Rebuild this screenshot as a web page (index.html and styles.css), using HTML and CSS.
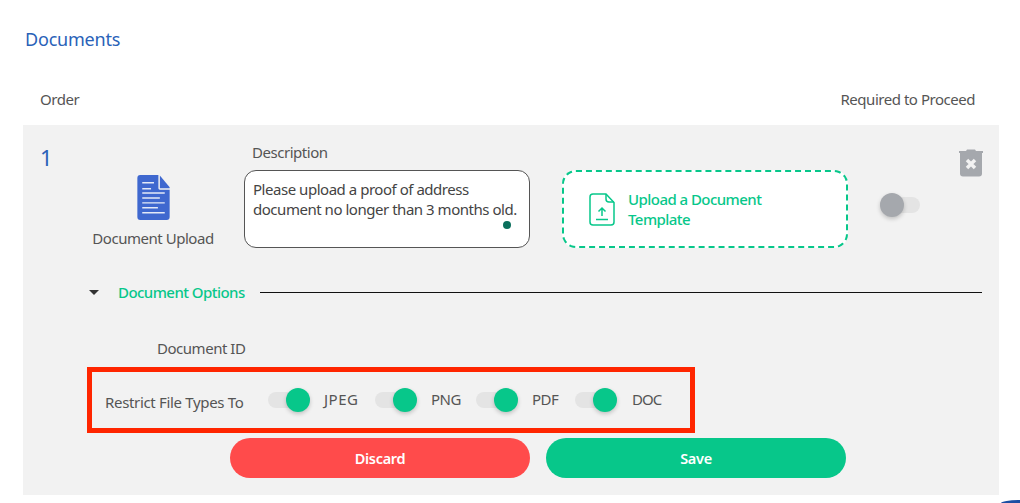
FILE: index.html
```html
<!DOCTYPE html>
<html lang="en">
<head>
<meta charset="utf-8">
<title>Documents</title>
<link rel="stylesheet" href="styles.css">
</head>
<body>
<main class="page">
  <h2 class="title">Documents</h2>
  <div class="columns"><span>Order</span><span>Required to Proceed</span></div>
  <section class="panel">
    <div class="top-row">
      <div class="order">1</div>
      <div class="doc-type">
        <svg class="doc-icon" viewBox="0 0 33 46" width="33" height="46" aria-hidden="true">
          <path d="M3 0H21.5V13.5Q21.5 15 23 15H33V43Q33 46 30 46H3Q0 46 0 43V3Q0 0 3 0Z" fill="#3f68cf"/>
          <path d="M23 0.5L33 12.5V13.5H23Z" fill="#3f68cf"/>
          <path d="M5 8H17M5 14H14M5 18.500H28M5 23.500H23M5 28.500H28M5 33.500H21M5 38.500H28" stroke="#e4e9f7" stroke-width="1.500" fill="none"/>
        </svg>
        <span>Document Upload</span>
      </div>
      <div class="description">
        <label class="desc-label">Description</label>
        <div class="desc-box">Please upload a proof of address document no longer than 3 months old.<i class="dot"></i></div>
      </div>
      <div class="upload">
        <svg viewBox="0 0 26 33" width="26" height="33" fill="none" stroke="#07c78a" stroke-width="1.500" aria-hidden="true">
          <path d="M4 1H17L25 9.500V29Q25 32 22 32H4Q1 32 1 29V4Q1 1 4 1Z"/>
          <path d="M17 1V6Q17 9 20 9H25"/>
          <path d="M13 23V15M9.500 18.500L13 15L16.500 18.500M7 26.500H19"/>
        </svg>
        <span class="upload-text">Upload a Document<br>Template</span>
      </div>
      <div class="toggle off"><i></i></div>
      <svg class="trash" viewBox="0 0 24 28" width="24" height="28" aria-hidden="true">
        <path d="M8 0.500H16L17 2H24V4H0V2H7Z" fill="#a5a8ad"/>
        <path d="M1 4H23V24.500Q23 27.500 20 27.500H4Q1 27.500 1 24.500Z" fill="#a5a8ad"/>
        <path d="M8 11L16 19M16 11L8 19" stroke="#f2f2f2" stroke-width="3.500" fill="none"/>
      </svg>
    </div>
    <div class="options-row">
      <i class="caret"></i>
      <span class="options-label">Document Options</span>
      <hr class="rule">
    </div>
    <div class="id-row">Document ID</div>
    <div class="restrict">
      <span class="restrict-label">Restrict File Types To</span>
      <div class="toggle on"><i></i></div><span class="type t-jpeg">JPEG</span>
      <div class="toggle on"><i></i></div><span class="type t-png">PNG</span>
      <div class="toggle on"><i></i></div><span class="type t-pdf">PDF</span>
      <div class="toggle on"><i></i></div><span class="type t-doc">DOC</span>
    </div>
    <div class="actions">
      <button class="btn discard">Discard</button>
      <button class="btn save">Save</button>
    </div>
  </section>
</main>
<div class="chat-bubble"></div>
</body>
</html>
```
FILE: styles.css
```css
* { box-sizing: border-box; }
html, body { height: 100%; overflow: hidden; }
body {
  margin: 0;
  background: #fff;
  color: #555;
  font-family: "Noto Sans", "Open Sans", sans-serif;
  font-size: 15px;
  letter-spacing: -0.47px;
  position: relative;
}
.page { padding: 28px 21px 0 23px; }
.title {
  margin: 0 0 0 2px;
  font-size: 18px;
  line-height: 22px;
  font-weight: 400;
  letter-spacing: -0.2px;
  color: #2a62b8;
}
.columns {
  display: flex;
  justify-content: space-between;
  margin-top: 39px;
  padding: 0 24px 0 17px;
  line-height: 20px;
  height: 36px;
}
.panel {
  background: #f2f2f2;
  height: 370px;
  padding: 0 17px;
}
.top-row { display: flex; height: 123px; }
.order {
  width: 50px;
  flex: none;
  padding-top: 19px;
  font-size: 22px;
  line-height: 26px;
  color: #2a62b8;
}
.doc-type {
  width: 126px;
  flex: none;
  padding-top: 50px;
  display: flex;
  flex-direction: column;
  align-items: center;
  gap: 8px;
  line-height: 20px;
}
.doc-icon { display: block; }
.description { margin-left: 28px; width: 286px; flex: none; padding-top: 17px; }
.desc-label { display: block; margin-left: 8px; height: 28px; line-height: 20px; }
.desc-box {
  position: relative;
  height: 78px;
  background: #fff;
  border: 1px solid #555;
  border-radius: 12px;
  padding: 8px 8px;
  line-height: 20px;
  color: #444;
}
.dot {
  position: absolute;
  right: 18px;
  bottom: 18px;
  width: 8px;
  height: 8px;
  border-radius: 50%;
  background: #0a6f5c;
}
.upload {
  margin: 45px 0 0 32px;
  width: 286px;
  flex: none;
  height: 78px;
  background: #fff;
  border: 2px dashed #07c78a;
  border-radius: 14px;
  display: flex;
  align-items: center;
  gap: 13px;
  padding-left: 25px;
  color: #07c78a;
  line-height: 20px;
  font-weight: 500;
  letter-spacing: -0.55px;
}
.toggle { position: relative; width: 42px; height: 24px; flex: none; }
.toggle::before {
  content: "";
  position: absolute;
  left: 0;
  right: 0;
  top: 4px;
  height: 16px;
  border-radius: 8px;
  background: #e4e4e4;
}
.toggle i {
  position: absolute;
  top: 0;
  width: 24px;
  height: 24px;
  border-radius: 50%;
  box-shadow: 0 2px 4px rgba(0,0,0,.2);
}
.toggle.on i { right: 0; background: #07c78a; }
.toggle.off { width: 40px; margin: 68px 0 0 32px; }
.toggle.off i { left: 0; background: #a5a8ad; }
.trash { margin: 24px 0 0 39px; flex: none; }
.options-row { display: flex; align-items: center; height: 22px; margin-top: 33px; padding-left: 49px; }
.caret {
  width: 0;
  height: 0;
  border: 5.500px solid transparent;
  border-top: 5.500px solid #333;
  border-bottom: 0;
  margin-right: 19px;
}
.options-label { color: #07c78a; font-weight: 500; width: 126px; flex: none; white-space: nowrap; letter-spacing: -0.55px; }
.rule { flex: 1; margin: 0 0 0 16px; border: 0; border-top: 1px solid #111; }
.id-row { margin-top: 35px; padding-left: 117px; line-height: 20px; }
.restrict {
  display: flex;
  align-items: center;
  width: 608px;
  height: 66px;
  margin: 9px 0 0 47px;
  border: 5px solid #ff2600;
  padding-left: 13px;
}
.restrict-label { width: 163px; flex: none; padding-top: 4px; letter-spacing: -0.33px; }
.type { margin: -2px 0 0 14px; }
.t-jpeg { width: 51px; letter-spacing: 0.5px; }
.t-png { width: 45px; }
.t-pdf { width: 43px; }
.t-doc { margin-left: 15px; letter-spacing: -0.9px; }
.actions { display: flex; gap: 16px; margin: 5px 0 0 190px; }
.btn {
  width: 300px;
  height: 40px;
  border: 0;
  border-radius: 20px;
  color: #fff;
  font: 600 14.500px "Noto Sans", "Open Sans", sans-serif;
  letter-spacing: -0.3px;
}
.discard { background: #ff4b4b; }
.save { background: #07c78a; }
.chat-bubble {
  position: absolute;
  right: 0;
  bottom: 0;
  width: 19px;
  height: 3px;
  border-radius: 19px 0 0 0 / 3px 0 0 0;
  background: #1b4ea3;
}
```
